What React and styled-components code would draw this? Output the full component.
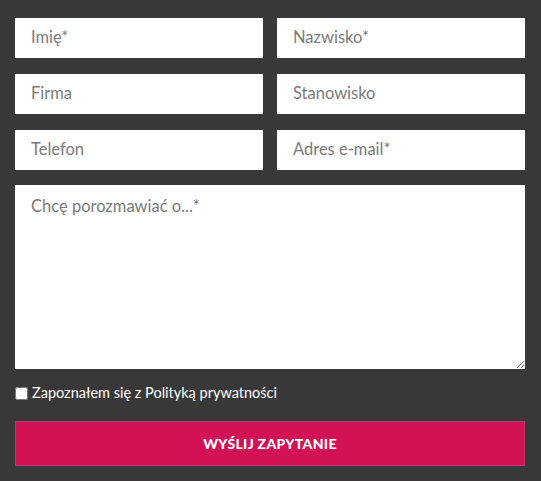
import React from 'react';
import styled, { createGlobalStyle } from 'styled-components';

const GlobalStyle = createGlobalStyle`
    html, body {
        margin: 0;
        padding: 0;
        background: #383838;
    }
    * {
        box-sizing: border-box;
    }
`

const FormWrapper = styled.form`
    width: 541px;
    height: 481px;
    background: #383838;
    padding: 18px 16px 0 15px;
    font-family: Lato, "Open Sans", sans-serif;
`

const Row = styled.div`
    display: grid;
    grid-template-columns: 248px 248px;
    column-gap: 14px;
    margin-bottom: 16px;
`

const Field = styled.input`
    height: 40px;
    width: 100%;
    border: none;
    outline: none;
    background: #ffffff;
    padding: 0 16px 2px;
    font-family: Lato, sans-serif;
    font-size: 16.5px;
    color: #333;
    &::placeholder {
        color: #7a7a7a;
    }
`

const Message = styled.textarea`
    display: block;
    width: 510px;
    height: 184px;
    margin-top: -1px;
    border: none;
    outline: none;
    background: #ffffff;
    padding: 10px 16px;
    font-family: Lato, sans-serif;
    font-size: 16.5px;
    line-height: 22px;
    resize: vertical;
    &::placeholder {
        color: #7a7a7a;
    }
`

const Consent = styled.label`
    display: flex;
    align-items: center;
    gap: 4px;
    margin-top: 16px;
    color: #ffffff;
    font-family: Lato, sans-serif;
    font-size: 14.5px;
    line-height: 16px;
`

const Check = styled.input`
    width: 13px;
    height: 13px;
    margin: 0;
`

const SubmitButton = styled.button`
    display: block;
    width: 510px;
    height: 45px;
    margin-top: 20px;
    background: #d31157;
    border: 1px solid #b83a68;
    color: #ffffff;
    font-family: Lato, sans-serif;
    font-weight: 900;
    font-size: 14px;
    letter-spacing: 0.3px;
    cursor: pointer;
`

const fields = [
    ['Imię*', 'Nazwisko*'],
    ['Firma', 'Stanowisko'],
    ['Telefon', 'Adres e-mail*'],
]

export default function App() {
    return (
        <>
            <GlobalStyle />
            <FormWrapper onSubmit={e => e.preventDefault()}>
                {fields.map((pair, i) => (
                    <Row key={i}>
                        {pair.map(p => (
                            <Field key={p} placeholder={p} />
                        ))}
                    </Row>
                ))}
                <Message placeholder="Chcę porozmawiać o...*" />
                <Consent>
                    <Check type="checkbox" />
                    Zapoznałem się z Polityką prywatności
                </Consent>
                <SubmitButton type="submit">WYŚLIJ ZAPYTANIE</SubmitButton>
            </FormWrapper>
        </>
    )
}
